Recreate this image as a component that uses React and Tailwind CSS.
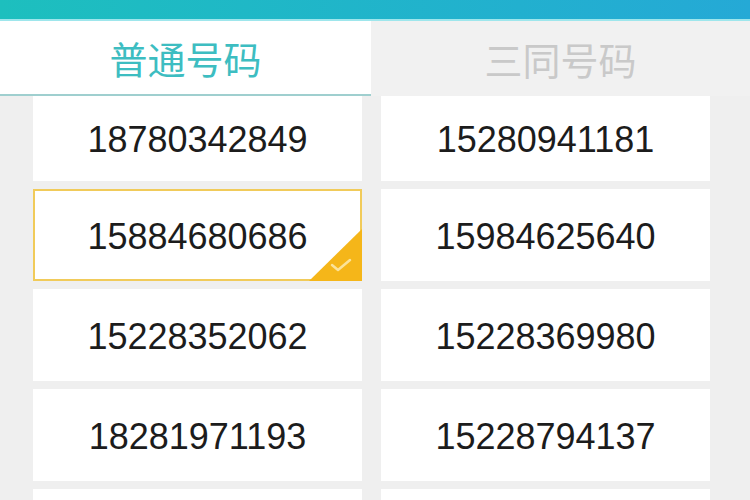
const rows = [
    ['18780342849', '15280941181'],
    ['15884680686', '15984625640'],
    ['15228352062', '15228369980'],
    ['18281971193', '15228794137'],
    ['', ''],
];

const selected = '15884680686';

function NumberCard({ value, first }) {
    const isSelected = value === selected;
    return (
        <div
            className={`relative flex shrink-0 items-center justify-center bg-white ${first ? 'h-[85px]' : 'h-[92px]'} ${
                isSelected ? 'border-2 border-[#f1cb5a]' : ''
            }`}
        >
            <span className="pt-[3px] text-[36px] leading-none text-[#1c1c1c] [font-family:'Liberation_Sans',Arial,sans-serif]">
                {value}
            </span>
            {isSelected && (
                <svg className="absolute -bottom-[2px] -right-[2px] h-[54px] w-[54px]" viewBox="0 0 54 54">
                    <polygon points="54,2 54,54 1,54" fill="#f5b619" />
                    <path d="M24 38 L30 43 L42 33" fill="none" stroke="#fbe39a" strokeWidth="2.5" strokeLinecap="round" strokeLinejoin="round" />
                </svg>
            )}
        </div>
    );
}

export default function App() {
    return (
        <div className="flex h-[500px] w-[750px] flex-col overflow-hidden bg-[#efefef]">
            {/* Header bar */}
            <div className="h-[21px] shrink-0 border-b-2 border-[#9ee6ec] bg-gradient-to-r from-[#1dbfbe] to-[#25a9d6]" />

            {/* Tabs */}
            <div className="flex h-[75px] shrink-0 [font-family:'Noto_Sans_CJK_SC',sans-serif]">
                <div className="flex w-[371px] items-center justify-center border-b-2 border-[#9fcfcf] bg-white">
                    <span className="text-[38px] leading-none text-[#3dbdc1]">普通号码</span>
                </div>
                <div className="flex flex-1 items-center justify-center bg-[#f1f1f1]">
                    <span className="text-[38px] leading-none text-[#c9c9c9]">三同号码</span>
                </div>
            </div>

            {/* Number grid */}
            <div className="flex gap-[19px] pl-[33px] pr-[40px]">
                {[0, 1].map((col) => (
                    <div key={col} className="flex flex-1 flex-col gap-[8px]">
                        {rows.map((row, i) => (
                            <NumberCard key={i} value={row[col]} first={i === 0} />
                        ))}
                    </div>
                ))}
            </div>
        </div>
    );
}
